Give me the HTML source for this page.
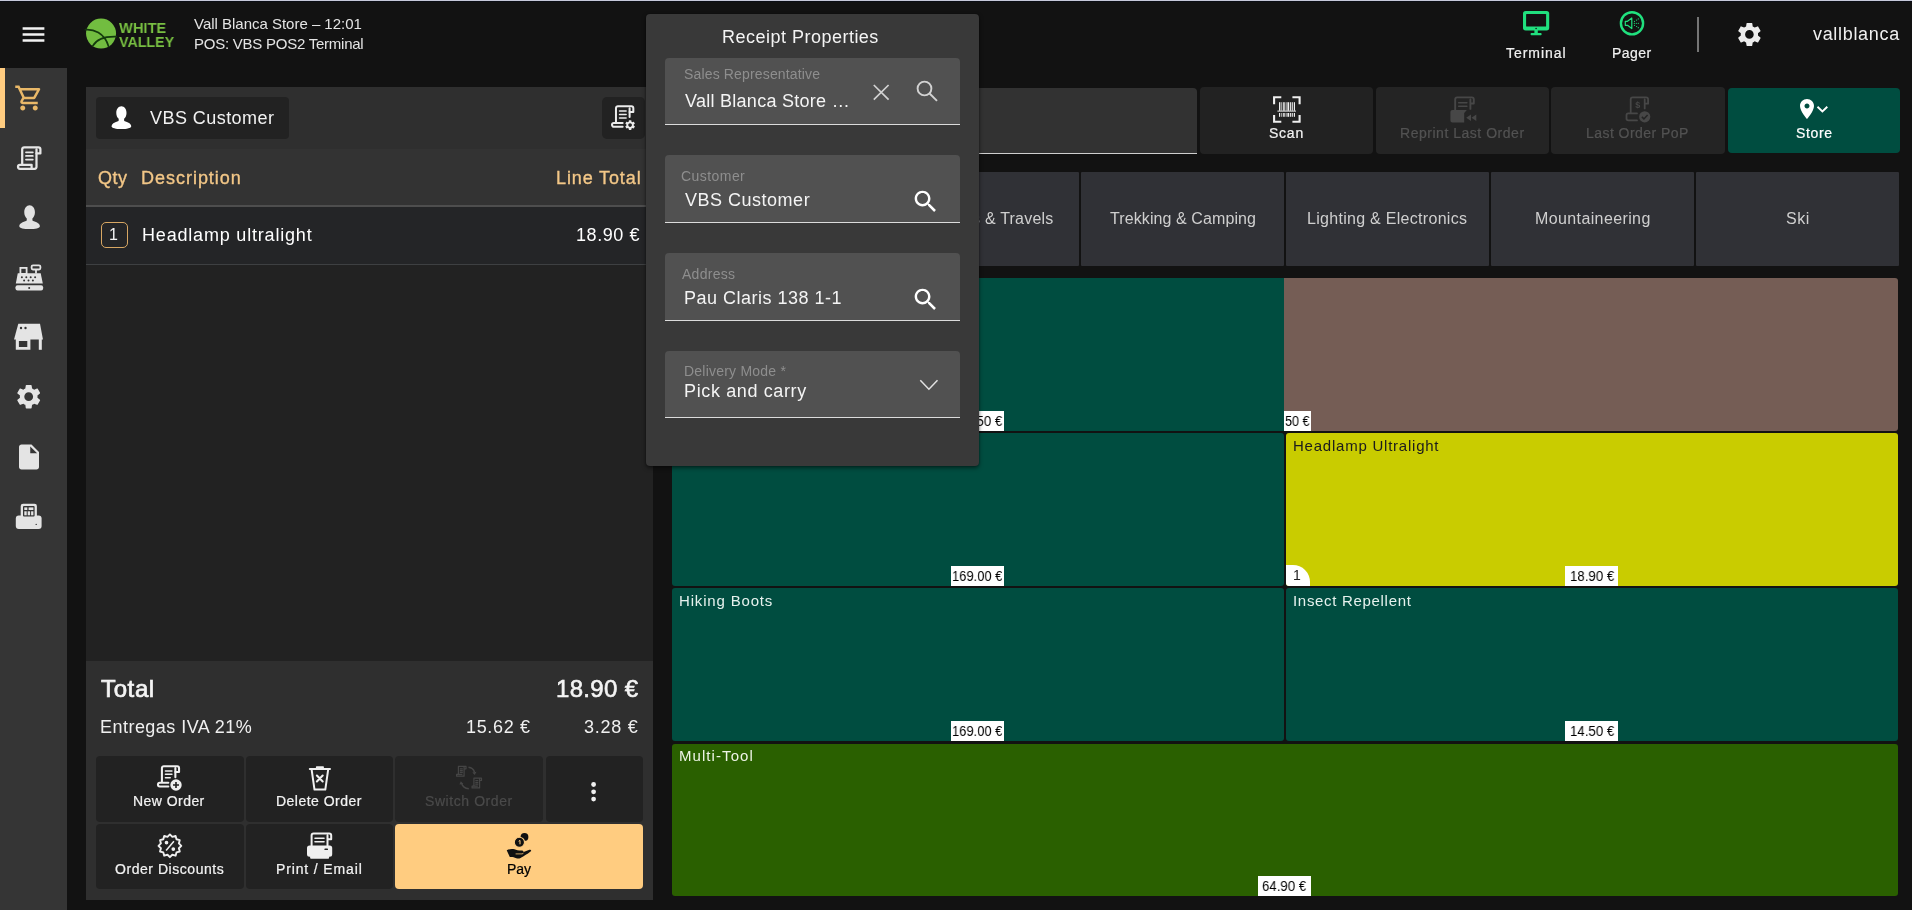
<!DOCTYPE html>
<html lang="en">
<head>
<meta charset="utf-8">
<title>POS - Receipt Properties</title>
<style>
*{box-sizing:border-box;margin:0;padding:0}
html,body{width:1912px;height:910px;overflow:hidden;background:#121212}
body{position:relative;font-family:"Liberation Sans",sans-serif;color:#fff;font-size:14px}
.a{position:absolute}
.t{position:absolute;white-space:pre;line-height:1;will-change:transform}
svg{display:block;position:absolute;overflow:visible}
.btn{position:absolute;background:#222;border-radius:4px}
.tab{position:absolute;top:172px;height:94.200px;width:202.950px;background:#303136;border-radius:1px}
.tile{position:absolute;border-radius:3px;overflow:hidden}
.pl{position:absolute;background:#fff;height:19.8px;width:52.8px}
.fld{position:absolute;left:665px;width:295px;background:#515151;border-radius:4px 4px 0 0;border-bottom:1.4px solid #dcdcdc}
</style>
</head>
<body>
<svg width="0" height="0" style="position:absolute">
<defs>
<symbol id="rcpt" viewBox="0 0 24.4 24" overflow="visible">
<g fill="none" stroke="currentColor" stroke-width="2.25" stroke-linecap="round" stroke-linejoin="round">
<path d="M5.2 17.8V3.3a2 2 0 0 1 2-2H21.4a2 2 0 0 1 2 2V7.4H19.5"/>
<path d="M19.5 3.3V20.8a2 2 0 0 1-2 2H3a2 2 0 0 1 0-4H14.6V22"/>
<path stroke-width="1.8" d="M9 6.3H15.8M9 9.9H15.8M9 13.600H15.8"/>
</g>
</symbol>
<symbol id="gear" viewBox="0 0 24 24"><path fill="currentColor" d="M19.14 12.94c.04-.3.06-.61.06-.94 0-.32-.02-.64-.07-.94l2.030-1.580c.18-.14.23-.41.12-.61l-1.920-3.320c-.12-.22-.37-.29-.59-.22l-2.390.96c-.5-.38-1.030-.7-1.620-.94l-.36-2.540c-.04-.24-.24-.41-.48-.41h-3.840c-.24 0-.43.17-.47.41l-.36 2.540c-.59.24-1.130.57-1.620.94l-2.390-.96c-.22-.08-.47 0-.59.22L2.740 8.870c-.12.21-.08.47.12.61l2.030 1.580c-.05.3-.09.63-.09.94s.02.64.07.94l-2.030 1.580c-.18.14-.23.41-.12.61l1.920 3.320c.12.22.37.29.59.22l2.390-.96c.5.38 1.030.7 1.620.94l.36 2.540c.05.24.24.41.48.41h3.840c.24 0 .44-.17.47-.41l.36-2.540c.59-.24 1.130-.56 1.620-.94l2.390.96c.22.08.47 0 .59-.22l1.920-3.320c.12-.22.07-.47-.12-.61l-2.010-1.580zM12 15.600c-1.980 0-3.600-1.620-3.600-3.600s1.620-3.600 3.600-3.600 3.600 1.620 3.600 3.600-1.620 3.600-3.600 3.600z"/></symbol>
<symbol id="srch" viewBox="0 0 24 24"><path fill="currentColor" d="M15.5 14h-.79l-.28-.27C15.410 12.590 16 11.110 16 9.500 16 5.910 13.090 3 9.500 3S3 5.910 3 9.500 5.910 16 9.500 16c1.610 0 3.090-.59 4.230-1.570l.27.28v.79l5 4.990L20.490 19l-4.990-5zm-6 0C7.010 14 5 11.990 5 9.500S7.010 5 9.500 5 14 7.010 14 9.500 11.990 14 9.500 14z"/></symbol>
<symbol id="person" viewBox="0 0 21 24"><path fill="currentColor" d="M10.500.3c3 0 5.300 2.900 5.300 6.900 0 2.600-1 4.800-2.500 6.100v1.500c0 .5.300.9.800 1.100 3.900 1.300 6.600 2.800 6.600 5.100 0 2-4.500 2.900-10.200 2.900S.300 23 .300 21c0-2.300 2.700-3.800 6.600-5.100.5-.2.800-.6.800-1.100v-1.500C6.200 12 5.200 9.800 5.200 7.200 5.200 3.200 7.500.3 10.500.3z"/></symbol>
</defs>
</svg>
<!-- top hairline -->
<div class="a" style="left:0;top:0;width:1912px;height:1px;background:#c6c9da"></div>
<div class="a" style="left:0;top:1px;width:1912px;height:1px;background:#0b0e15"></div>

<!-- hamburger -->
<svg style="left:19px;top:20px" width="29" height="29" viewBox="0 0 24 24"><path fill="#f2f2f2" d="M3 18h18v-2H3v2zm0-5h18v-2H3v2zm0-7v2h18V6H3z"/></svg>

<!-- logo -->
<svg style="left:85px;top:17px" width="33" height="33" viewBox="85 17 33 33">
<circle cx="101.050" cy="33.600" r="15" fill="#72bd40"/>
<g fill="none" stroke="#143a0d" stroke-width="1.700" stroke-linecap="round">
<path d="M85.400 29.600C93 29 104.500 32.500 108.600 46.500"/>
<path d="M92.800 45.800C96 40 104 36.200 116.300 36.600"/>
</g>
</svg>

<!-- top right status -->
<svg style="left:1520px;top:8px" width="32" height="30" viewBox="1520 8 32 30">
<rect x="1523" y="11" width="26.200" height="19.400" rx="2.600" fill="#20e07e"/>
<rect x="1526.100" y="14" width="20" height="12.600" rx=".6" fill="#121212"/>
<circle cx="1536.100" cy="28.500" r=".8" fill="#121212"/>
<rect x="1534.400" y="30" width="3.400" height="3.400" fill="#20e07e"/>
<rect x="1530.600" y="33" width="11" height="2.200" rx=".8" fill="#20e07e"/>
</svg>
<svg style="left:1616px;top:8px" width="32" height="32" viewBox="1616 8 32 32">
<circle cx="1632" cy="23.300" r="11.100" fill="none" stroke="#20e07e" stroke-width="2.400"/>
<path d="M1625.300 21.300h2.200l4.300-3.300v10.600l-4.300-3.300h-2.200z" fill="none" stroke="#20e07e" stroke-width="1.200" stroke-linejoin="round"/>
<g fill="#20e07e"><circle cx="1634.300" cy="23.300" r=".6"/><circle cx="1636.300" cy="23.300" r=".6"/><circle cx="1638.300" cy="23.300" r=".6"/><circle cx="1634.500" cy="21.300" r=".6"/><circle cx="1636.600" cy="20.100" r=".6"/><circle cx="1638.300" cy="18.900" r=".6"/><circle cx="1634.500" cy="25.300" r=".6"/><circle cx="1636.600" cy="26.500" r=".6"/><circle cx="1638.300" cy="27.700" r=".6"/></g>
</svg>
<div class="a" style="left:1697px;top:17px;width:2px;height:35px;background:#757575"></div>
<svg style="left:1735.100px;top:20.300px;color:#ececec" width="28.800" height="28.800"><use href="#gear"/></svg>

<!-- sidebar -->
<div class="a" style="left:0;top:68px;width:67px;height:842px;background:#353535"></div>
<div class="a" style="left:0;top:68px;width:5px;height:60px;background:#ffcc80"></div>
<svg style="left:14px;top:83px" width="30" height="30" viewBox="0 0 24 24"><path fill="#e9b868" d="M15.550 13c.75 0 1.410-.41 1.750-1.030l3.580-6.490c.37-.66-.11-1.480-.87-1.480H5.210l-.94-2H1v2h2l3.600 7.590-1.350 2.440C4.520 15.370 5.480 17 7 17h12v-2H7l1.100-2h7.450zM6.160 6h12.150l-2.760 5H8.530L6.160 6zM7 18c-1.100 0-1.990.9-1.990 2S5.900 22 7 22s2-.9 2-2-.9-2-2-2zm10 0c-1.100 0-1.990.9-1.990 2s.89 2 1.990 2 2-.9 2-2-.9-2-2-2z"/></svg>
<svg style="left:16.500px;top:145.600px;color:#e6e6e6" width="24.400" height="24"><use href="#rcpt"/></svg>
<svg style="left:18.900px;top:205px;color:#e2e2e2" width="21.200" height="24.200"><use href="#person"/></svg>
<!-- cash register -->
<svg style="left:14px;top:262px" width="31" height="30" viewBox="14 262 31 30">
<g fill="#e4e4e4">
<path d="M17.800 273.200h22.900l2.100 10.200h-27z"/>
<rect x="15.500" y="285.200" width="27.600" height="5.400" rx="2"/>
</g>
<g fill="none" stroke="#e4e4e4" stroke-width="1.800">
<rect x="20.400" y="267.900" width="6.200" height="6"/>
<rect x="31.600" y="265.300" width="8.800" height="4.200" rx="1.400"/>
<path d="M36 269.500v4"/>
</g>
<g fill="#333"><circle cx="21.900" cy="277.300" r="1"/><circle cx="26.300" cy="277.300" r="1"/><circle cx="30.700" cy="277.300" r="1"/><circle cx="35.100" cy="277.300" r="1"/><circle cx="24.100" cy="280.600" r="1"/><circle cx="28.500" cy="280.600" r="1"/><circle cx="32.900" cy="280.600" r="1"/><circle cx="29.200" cy="287.900" r="1"/></g>
</svg>
<!-- store -->
<svg style="left:13px;top:322px" width="32" height="30" viewBox="13 322 32 30">
<g fill="#e4e4e4">
<path d="M18.300 323.800h21.700l3 15.700h-29z"/>
<path d="M15.800 339h14.600v10.800H15.800zM18.900 341v6h8.400v-6z" fill-rule="evenodd"/>
<rect x="38.800" y="339" width="3" height="10.800"/>
</g>
<g fill="#333"><circle cx="21" cy="328" r="1.200"/><circle cx="25.500" cy="328" r="1.200"/></g>
</svg>
<svg style="left:13.500px;top:382.400px;color:#e4e4e4" width="29.400" height="29.400"><use href="#gear"/></svg>
<svg style="left:13.800px;top:441.900px" width="30" height="30" viewBox="0 0 24 24"><path fill="#e4e4e4" d="M6 2c-1.100 0-1.990.9-1.990 2L4 20c0 1.100.89 2 1.990 2H18c1.100 0 2-.9 2-2V8l-6-6H6zm7 7V3.500L18.500 9H13z"/></svg>
<!-- receipt printer -->
<svg style="left:14px;top:502px" width="30" height="29" viewBox="14 502 30 29">
<g fill="#e4e4e4">
<rect x="15.800" y="515.600" width="25.800" height="13.300" rx="3"/>
<rect x="20.700" y="503.700" width="16.200" height="15" rx="2.400"/>
</g>
<g fill="#333">
<rect x="23" y="506" width="11.600" height="10.500" rx="1"/>
<circle cx="36.200" cy="524.400" r=".7"/>
</g>
<g fill="#e4e4e4">
<rect x="24.300" y="507.400" width="3" height="2.600"/><rect x="28.600" y="507.400" width="4.800" height="2.600"/>
<rect x="24.300" y="511.300" width="2.400" height="4"/><rect x="27.700" y="511.300" width="2.400" height="4"/><rect x="31.100" y="511.300" width="2.300" height="4"/>
</g>
</svg>
<!-- left order panel -->
<div class="a" style="left:86px;top:86.700px;width:567px;height:813.500px;background:#222"></div>
<div class="a" style="left:86px;top:86.700px;width:567px;height:62.300px;background:#2f2f2f"></div>
<div class="a" style="left:86px;top:149px;width:567px;height:57px;background:#333"></div>
<div class="a" style="left:86px;top:205.300px;width:567px;height:1.400px;background:#4e4e4e"></div>
<div class="a" style="left:86px;top:206.700px;width:567px;height:57.600px;background:#242527"></div>
<div class="a" style="left:86px;top:264.100px;width:567px;height:1.200px;background:#3e4042"></div>
<div class="a" style="left:86px;top:660.800px;width:567px;height:239.400px;background:#2f2f2f"></div>

<div class="btn" style="left:96px;top:97px;width:193.400px;height:42.400px"></div>
<svg style="left:111.200px;top:105.700px;color:#fff" width="20.800" height="23.200"><use href="#person"/></svg>
<div class="btn" style="left:602.400px;top:97px;width:42.600px;height:42.400px;border-radius:5px"></div>
<svg style="left:611.300px;top:105px;color:#ececec" width="23.300" height="22.900" viewBox="0 0 24.400 24">
<g fill="none" stroke="currentColor" stroke-width="2.100" stroke-linecap="round" stroke-linejoin="round">
<path d="M5.200 17.800V3.300a2 2 0 0 1 2-2H21.400a2 2 0 0 1 2 2V7.400H19.500"/>
<path d="M19.500 3.300V12.600M12.200 22.800H3a2 2 0 0 1 0-4H12.200"/>
<path stroke-width="1.700" d="M9 6.300H15.800M9 9.900H15.800M9 13.600H15.800"/>
</g>
</svg>
<svg style="left:624.100px;top:119.400px;color:#ececec" width="12.200" height="12.200"><use href="#gear"/></svg>

<!-- qty box -->
<div class="a" style="left:101px;top:221.800px;width:26.800px;height:26.400px;border:1.300px solid #d8a763;border-radius:5px"></div>

<!-- bottom buttons -->
<div class="btn" style="left:96.300px;top:756.300px;width:147.300px;height:66px"></div>
<div class="btn" style="left:245.600px;top:756.300px;width:147.400px;height:66px"></div>
<div class="btn" style="left:395.300px;top:756.300px;width:147.700px;height:66px;background:#242424"></div>
<div class="btn" style="left:545.500px;top:756.300px;width:97.500px;height:66px"></div>
<div class="btn" style="left:96.300px;top:824.300px;width:147.300px;height:65.200px"></div>
<div class="btn" style="left:245.600px;top:824.300px;width:147.400px;height:65.200px"></div>
<div class="btn" style="left:395.200px;top:824.300px;width:247.800px;height:65.200px;background:#ffcc80"></div>

<!-- New Order icon -->
<svg style="left:157px;top:765.400px;color:#f0f0f0" width="23" height="22.600" viewBox="0 0 24.400 24">
<g fill="none" stroke="currentColor" stroke-width="2.200" stroke-linecap="round" stroke-linejoin="round">
<path d="M5.200 17.800V3.300a2 2 0 0 1 2-2H21.400a2 2 0 0 1 2 2V7.400H19.500"/>
<path d="M19.500 3.300V13M12 22.800H3a2 2 0 0 1 0-4H12"/>
<path stroke-width="1.700" d="M9 6.300H15.800M9 9.900H15.800M9 13.600H14"/>
</g>
</svg>
<svg style="left:169.900px;top:779.400px" width="12" height="12" viewBox="0 0 12 12"><circle cx="6" cy="6" r="5.700" fill="#f0f0f0"/><path d="M6 3v6M3 6h6" stroke="#222" stroke-width="1.600" fill="none"/></svg>

<!-- Delete Order icon -->
<svg style="left:308px;top:765px" width="24" height="27" viewBox="308 765 24 27">
<g fill="none" stroke="#f0f0f0" stroke-width="2" stroke-linecap="round" stroke-linejoin="round">
<path d="M309.800 769h20.200M316.800 767.300h6.200"/>
<path d="M311.600 769.300l2.900 20.300h10.800l2.900-20.300"/>
<path stroke-width="2.100" d="M316.900 775.600l5.800 5.800M322.700 775.600l-5.800 5.800"/>
</g>
</svg>

<!-- Switch Order icon (disabled) -->
<svg style="left:455px;top:765px" width="28" height="26" viewBox="455 765 28 26">
<g fill="none" stroke="#454545" stroke-width="1.200" stroke-linejoin="round">
<path d="M458.400 774.800v-8.400h7.600v2.400h-1.900M464.100 766.400v9.800h-7.500v-1.800h5.800"/>
<path d="M459.800 768.800h3M459.800 770.600h3M459.800 772.400h3"/>
<path d="M472.400 788v-8.400h7.600v2.400h-1.900M478.100 779.600v9.800h-7.500v-1.800h5.800" transform="translate(1.500 -1.500)"/>
<path d="M475.300 780.500h3M475.300 782.300h3M475.300 784.100h3"/>
<path stroke-width="1.500" d="M468.500 767.200c3 .3 5.200 2 6 5"/>
<path stroke-width="1.500" d="M468.800 788.800c-3.800-.5-6.200-2.200-7.200-5.600"/>
</g>
<path d="M472.300 772.600l4.200-.8-1.800 3.300z" fill="#454545"/><path d="M459.400 784.500l1.400-3.200 2.600 2.600z" fill="#454545"/>
</svg>

<!-- more dots -->
<svg style="left:589px;top:780px" width="10" height="24" viewBox="589 780 10 24"><g fill="#f0f0f0"><circle cx="593.600" cy="784.500" r="2.400"/><circle cx="593.600" cy="791.800" r="2.400"/><circle cx="593.600" cy="799.100" r="2.400"/></g></svg>

<!-- Order Discounts icon -->
<svg style="left:157px;top:832px" width="26" height="28" viewBox="157 832 26 28">
<path fill="none" stroke="#f0f0f0" stroke-width="1.900" stroke-linejoin="round" d="M169.90 834.40L172.31 836.82L175.60 835.93L176.48 839.22L179.77 840.10L178.88 843.39L181.30 845.80L178.88 848.21L179.77 851.50L176.48 852.38L175.60 855.67L172.31 854.78L169.90 857.20L167.49 854.78L164.20 855.67L163.32 852.38L160.03 851.50L160.92 848.21L158.50 845.80L160.92 843.39L160.03 840.10L163.32 839.22L164.20 835.93L167.49 836.82Z"/>
<g stroke="#f0f0f0" fill="none" stroke-width="1.500"><path d="M173.900 841.200l-7.800 9.300"/><circle cx="166.500" cy="842.600" r="1.100" fill="#f0f0f0"/><circle cx="173.300" cy="849.100" r="1.100" fill="#f0f0f0"/></g>
</svg>

<!-- Print / Email icon -->
<svg style="left:306px;top:831px" width="28" height="29" viewBox="306 831 28 29">
<g fill="none" stroke="#f0f0f0" stroke-width="2" stroke-linejoin="round" stroke-linecap="round">
<path d="M311.600 846v-10.500a2 2 0 0 1 2-2h15.600a2 2 0 0 1 2 2v3.800h-3.700M327.500 835.500v10.500"/>
<path stroke-width="1.600" d="M315 838.300h9M315 841.700h9"/>
</g>
<path fill="#f0f0f0" d="M309.500 845.600h20.200a2.500 2.500 0 0 1 2.500 2.500v6.200a2.500 2.500 0 0 1-2.500 2.500h-.6v1a1 1 0 0 1-1 1h-17a1 1 0 0 1-1-1v-1h-.6a2.500 2.500 0 0 1-2.500-2.500v-6.200a2.500 2.500 0 0 1 2.500-2.500z"/>
<rect x="324.400" y="848.600" width="3.600" height="1.500" rx=".7" fill="#222"/>
</svg>

<!-- Pay icon -->
<svg style="left:505px;top:831px" width="28" height="29" viewBox="505 831 28 29">
<g fill="#111">
<circle cx="524.500" cy="836.900" r="3.900"/>
<circle cx="519.400" cy="842.300" r="5.100" stroke="#ffcc80" stroke-width="1.100"/>
<path d="M506.700 850.200c2.600-1.300 5.400-1.600 7.800-.9 1.900.6 3.800 1.300 6.800 1.300 1.600 0 2.300.7 2.300 1.500l5.200-2.200c1.300-.5 2.500.1 2.400 1.100-2.300 2-7.600 5.300-10.600 6.900-1.500.8-2.600.9-4.300.3-2.400-.9-4.200-1.500-6.500-1.100z"/>
</g>
<path d="M515.600 853.900h6.400c.9 0 1.300-.5 1.300-1.100" fill="none" stroke="#c9a060" stroke-width="1"/>
<path d="M518.700 841.300l1.300-.9v3.900" fill="none" stroke="#ffcc80" stroke-width="1"/>
</svg>
<!-- search input -->
<div class="a" style="left:672px;top:87.600px;width:525.400px;height:66.400px;background:#323232;border-bottom:1.300px solid #cfcfcf;border-radius:4px 4px 0 0"></div>

<!-- toolbar buttons -->
<div class="btn" style="left:1199.700px;top:87px;width:173.300px;height:66.500px"></div>
<div class="btn" style="left:1375.500px;top:87px;width:173.400px;height:66.500px;background:#242424"></div>
<div class="btn" style="left:1551.300px;top:87px;width:173.300px;height:66.500px;background:#242424"></div>
<div class="btn" style="left:1727.600px;top:87.600px;width:172.700px;height:65.600px;background:#004d40"></div>

<!-- scan icon -->
<svg style="left:1272px;top:95px" width="30" height="29" viewBox="1272 95 30 29">
<g fill="none" stroke="#f0f0f0" stroke-width="2.100">
<path d="M1274.100 104.200v-7h7.200M1292.400 97.200h7.200v7M1299.600 115v6.700h-7.200M1281.300 121.700h-7.200V115"/>
</g>
<g fill="#f0f0f0">
<rect x="1279" y="102.200" width="1.400" height="8.600"/><rect x="1281.400" y="102.200" width=".8" height="8.600"/><rect x="1283.200" y="102.200" width="1.500" height="8.600"/><rect x="1285.700" y="102.200" width=".8" height="8.600"/><rect x="1287.400" y="102.200" width="1.800" height="8.600"/><rect x="1290.100" y="102.200" width="1.200" height="8.600"/><rect x="1292.200" y="102.200" width=".9" height="8.600"/><rect x="1293.900" y="102.200" width="1.100" height="8.600"/>
<rect x="1277.400" y="110.600" width="18.600" height="1"/>
<rect x="1279" y="113" width="1.200" height="3.800"/><rect x="1281.400" y="113" width=".8" height="3.800"/><rect x="1283.200" y="113" width="1.500" height="3.800"/><rect x="1285.700" y="113" width=".8" height="3.800"/><rect x="1287.400" y="113" width="1.800" height="3.800"/><rect x="1290.100" y="113" width="1.200" height="3.800"/><rect x="1292.200" y="113" width=".9" height="3.800"/><rect x="1293.900" y="113" width="1.100" height="3.800"/>
</g>
</svg>

<!-- reprint icon (disabled) -->
<svg style="left:1449px;top:95px" width="29" height="29" viewBox="1449 95 29 29">
<g fill="none" stroke="#474747" stroke-width="1.900" stroke-linejoin="round" stroke-linecap="round">
<path d="M1455.200 110v-10.600a2 2 0 0 1 2-2h14.600a2 2 0 0 1 2 2v4.100h-3.400M1470.400 99.400v9.500"/>
<path stroke-width="1.500" d="M1458.600 102.700h8.300M1458.600 106.200h8.300"/>
</g>
<path fill="#474747" d="M1452.400 110h14.400l-2.600 3v9.600h-11.800a2 2 0 0 1-2-2v-8.600a2 2 0 0 1 2-2z"/>
<path fill="#474747" d="M1471 114.600v6.400l-4.800-3.200zM1476.300 114.600v6.400l-4.800-3.200z"/>
</svg>

<!-- last order PoP icon (disabled) -->
<svg style="left:1624px;top:95px;will-change:transform" width="29" height="29" viewBox="1624 95 29 29">
<g fill="none" stroke="#474747" stroke-width="1.800" stroke-linejoin="round" stroke-linecap="round">
<path d="M1630.700 113.200v-13.800a2 2 0 0 1 2-2h13.400a2 2 0 0 1 2 2v4.300h-3.400M1644.700 99.400v9"/>
<path d="M1637 120.400h-8.700a1.800 1.800 0 0 1-1.800-1.800v-3.400a1.800 1.800 0 0 1 1.800-1.800h8.700"/>
</g>
<text x="1637.800" y="108.200" font-size="9" font-family="Liberation Sans,sans-serif" fill="#474747" text-anchor="middle" font-weight="700">$</text>
<circle cx="1644.700" cy="116.800" r="5.600" fill="#474747"/>
<path d="M1641.900 116.900l2 2 3.700-3.900" fill="none" stroke="#242424" stroke-width="1.500"/>
</svg>

<!-- store icon -->
<svg style="left:1794.900px;top:96.500px" width="24" height="24" viewBox="0 0 24 24"><path fill="#fff" d="M12 2C8.130 2 5 5.130 5 9c0 5.250 7 13 7 13s7-7.750 7-13c0-3.870-3.130-7-7-7zm0 9.500c-1.380 0-2.500-1.120-2.500-2.500s1.120-2.500 2.500-2.500 2.500 1.120 2.500 2.500-1.120 2.500-2.500 2.500z"/></svg>
<svg style="left:1815px;top:104px" width="15" height="10" viewBox="1815 104 15 10"><path d="M1817.500 106.700l4.900 4.700 4.900-4.700" fill="none" stroke="#fff" stroke-width="1.900"/></svg>

<!-- category tabs -->
<div class="tab" style="left:671.2px"></div>
<div class="tab" style="left:876.15px"></div>
<div class="tab" style="left:1081.1px"></div>
<div class="tab" style="left:1286.05px"></div>
<div class="tab" style="left:1491.0px"></div>
<div class="tab" style="left:1695.95px"></div>

<!-- product tiles -->
<div class="tile" style="left:672px;top:278px;width:1226px;height:153px;background:#755d55"></div>
<div class="tile" style="left:672px;top:278px;width:612.200px;height:153px;background:#004d40;border-radius:3px 0 0 3px"></div>
<div class="tile" style="left:672px;top:433px;width:612px;height:153px;background:#004d40"></div>
<div class="tile" style="left:1286.200px;top:433px;width:611.800px;height:153px;background:#c9cc00"></div>
<div class="tile" style="left:672px;top:588px;width:612px;height:153px;background:#004d40"></div>
<div class="tile" style="left:1286.200px;top:588px;width:611.800px;height:153px;background:#004d40"></div>
<div class="tile" style="left:672px;top:743.700px;width:1226px;height:152.500px;background:#2a6000"></div>

<!-- price labels -->
<div class="pl" style="left:951.300px;top:411.200px"></div>
<div class="pl" style="left:1284.200px;top:411.200px;width:26.800px"></div>
<div class="pl" style="left:951.300px;top:566.200px"></div>
<div class="pl" style="left:1565.400px;top:566.200px"></div>
<div class="pl" style="left:951.300px;top:721.200px"></div>
<div class="pl" style="left:1565.400px;top:721.200px"></div>
<div class="pl" style="left:1257.900px;top:876.300px"></div>
<!-- qty badge -->
<div class="a" style="left:1286.200px;top:565.400px;width:23.800px;height:20.600px;background:#fff;border-radius:0 17px 0 3px"></div>
<div class="t" style="left:194.3px;top:15.8px;font-size:15px;color:#e4e4e4;letter-spacing:-0.013px">Vall Blanca Store – 12:01</div>
<div class="t" style="left:193.6px;top:35.7px;font-size:15px;color:#e4e4e4;letter-spacing:-0.243px">POS: VBS POS2 Terminal</div>
<div class="t" style="left:119.0px;top:19.6px;font-size:15.5px;color:#78bf42;letter-spacing:0px;font-weight:700;transform:scaleX(0.9460);transform-origin:0 0">WHITE</div>
<div class="t" style="left:119.0px;top:33.5px;font-size:15.5px;color:#78bf42;letter-spacing:0px;font-weight:700;transform:scaleX(0.9183);transform-origin:0 0">VALLEY</div>
<div class="t" style="left:1506.2px;top:45.8px;font-size:14px;color:#f0f0f0;letter-spacing:0.943px;-webkit-text-stroke:0.22px">Terminal</div>
<div class="t" style="left:1611.9px;top:45.8px;font-size:14px;color:#f0f0f0;letter-spacing:0.425px;-webkit-text-stroke:0.22px">Pager</div>
<div class="t" style="left:1812.9px;top:24.8px;font-size:18px;color:#f0f0f0;letter-spacing:0.678px">vallblanca</div>
<div class="t" style="left:149.9px;top:109.0px;font-size:18px;color:#f2f2f2;letter-spacing:0.445px">VBS Customer</div>
<div class="t" style="left:98.3px;top:168.7px;font-size:18px;color:#f3c787;letter-spacing:0.5px;-webkit-text-stroke:0.35px">Qty</div>
<div class="t" style="left:140.5px;top:168.7px;font-size:18px;color:#f3c787;letter-spacing:0.98px;-webkit-text-stroke:0.35px">Description</div>
<div class="t" style="left:555.9px;top:168.7px;font-size:18px;color:#f3c787;letter-spacing:0.878px;-webkit-text-stroke:0.35px">Line Total</div>
<div class="t" style="left:109.2px;top:227.2px;font-size:16px;color:#f2f2f2;letter-spacing:0px">1</div>
<div class="t" style="left:142.3px;top:226.3px;font-size:18px;color:#ffffff;letter-spacing:0.811px">Headlamp ultralight</div>
<div class="t" style="left:576.4px;top:226.3px;font-size:18px;color:#ffffff;letter-spacing:0.567px">18.90 €</div>
<div class="t" style="left:101.4px;top:677.1px;font-size:24px;color:#f4f4f4;letter-spacing:0.625px;-webkit-text-stroke:0.7px">Total</div>
<div class="t" style="left:555.7px;top:677.1px;font-size:24px;color:#f4f4f4;letter-spacing:0.333px;-webkit-text-stroke:0.6px">18.90 €</div>
<div class="t" style="left:100.4px;top:718.4px;font-size:18px;color:#f0f0f0;letter-spacing:0.467px">Entregas IVA 21%</div>
<div class="t" style="left:466.1px;top:718.4px;font-size:18px;color:#f0f0f0;letter-spacing:0.65px">15.62 €</div>
<div class="t" style="left:583.9px;top:718.4px;font-size:18px;color:#f0f0f0;letter-spacing:0.76px">3.28 €</div>
<div class="t" style="left:133.3px;top:793.7px;font-size:14px;color:#f2f2f2;letter-spacing:0.45px;-webkit-text-stroke:0.22px">New Order</div>
<div class="t" style="left:276.1px;top:793.7px;font-size:14px;color:#f2f2f2;letter-spacing:0.482px;-webkit-text-stroke:0.22px">Delete Order</div>
<div class="t" style="left:424.7px;top:793.7px;font-size:14px;color:#4a4a4a;letter-spacing:0.573px;-webkit-text-stroke:0.22px">Switch Order</div>
<div class="t" style="left:115.1px;top:861.6px;font-size:14px;color:#f2f2f2;letter-spacing:0.543px;-webkit-text-stroke:0.22px">Order Discounts</div>
<div class="t" style="left:276.1px;top:861.6px;font-size:14px;color:#f2f2f2;letter-spacing:0.858px;-webkit-text-stroke:0.22px">Print / Email</div>
<div class="t" style="left:506.8px;top:861.8px;font-size:14px;color:#000;letter-spacing:-0.1px;-webkit-text-stroke:0.22px">Pay</div>
<div class="t" style="left:1268.9px;top:125.8px;font-size:14px;color:#f2f2f2;letter-spacing:0.767px;-webkit-text-stroke:0.22px">Scan</div>
<div class="t" style="left:1399.9px;top:125.8px;font-size:14px;color:#525252;letter-spacing:0.524px;-webkit-text-stroke:0.22px">Reprint Last Order</div>
<div class="t" style="left:1586.3px;top:125.8px;font-size:14px;color:#525252;letter-spacing:0.454px;-webkit-text-stroke:0.22px">Last Order PoP</div>
<div class="t" style="left:1795.8px;top:125.9px;font-size:14px;color:#ffffff;letter-spacing:0.65px;-webkit-text-stroke:0.22px">Store</div>
<div class="t" style="left:901.1px;top:211.3px;font-size:16px;color:#cfcfcf;letter-spacing:0.211px">Backpacks &amp; Travels</div>
<div class="t" style="left:1110.0px;top:211.3px;font-size:16px;color:#cfcfcf;letter-spacing:0.094px">Trekking &amp; Camping</div>
<div class="t" style="left:1307.2px;top:211.3px;font-size:16px;color:#cfcfcf;letter-spacing:0.29px">Lighting &amp; Electronics</div>
<div class="t" style="left:1534.5px;top:211.3px;font-size:16px;color:#cfcfcf;letter-spacing:0.385px">Mountaineering</div>
<div class="t" style="left:1785.5px;top:211.3px;font-size:16px;color:#cfcfcf;letter-spacing:0.5px">Ski</div>
<div class="t" style="left:1292.7px;top:437.9px;font-size:15px;color:#1c1c1c;letter-spacing:0.767px">Headlamp Ultralight</div>
<div class="t" style="left:678.6px;top:593.0px;font-size:15px;color:#e6f2ee;letter-spacing:0.827px">Hiking Boots</div>
<div class="t" style="left:1292.7px;top:593.0px;font-size:15px;color:#e6f2ee;letter-spacing:0.687px">Insect Repellent</div>
<div class="t" style="left:678.6px;top:748.0px;font-size:15px;color:#eef4e6;letter-spacing:1.067px">Multi-Tool</div>
<div class="t" style="left:958.12px;top:413.0px;font-size:15px;color:#000;letter-spacing:0px;transform:scaleX(0.8837);transform-origin:0 0">12.50 €</div>
<div class="t" style="left:1284.76px;top:413.0px;font-size:15px;color:#000;letter-spacing:0px;transform:scaleX(0.8429);transform-origin:0 0">50 €</div>
<div class="t" style="left:952.24px;top:568.0px;font-size:15px;color:#000;letter-spacing:0px;transform:scaleX(0.8632);transform-origin:0 0">169.00 €</div>
<div class="t" style="left:1569.62px;top:568.0px;font-size:15px;color:#000;letter-spacing:0px;transform:scaleX(0.8837);transform-origin:0 0">18.90 €</div>
<div class="t" style="left:952.24px;top:723.0px;font-size:15px;color:#000;letter-spacing:0px;transform:scaleX(0.8632);transform-origin:0 0">169.00 €</div>
<div class="t" style="left:1569.62px;top:723.0px;font-size:15px;color:#000;letter-spacing:0px;transform:scaleX(0.8837);transform-origin:0 0">14.50 €</div>
<div class="t" style="left:1262.22px;top:878.0px;font-size:15px;color:#000;letter-spacing:0px;transform:scaleX(0.8816);transform-origin:0 0">64.90 €</div>
<div class="t" style="left:1292.9px;top:568.2px;font-size:14px;color:#222;letter-spacing:0px">1</div>
<!-- dialog -->
<div class="a" style="left:646px;top:14px;width:333px;height:451.500px;background:#393939;border-radius:4px;box-shadow:0 2px 4px rgba(0,0,0,.5),0 0 2px rgba(0,0,0,.4)"></div>
<div class="fld" style="top:58.200px;height:66.800px"></div>
<div class="fld" style="top:155px;height:68.200px"></div>
<div class="fld" style="top:253.200px;height:68px"></div>
<div class="fld" style="top:351px;height:67px"></div>
<svg style="left:871px;top:82px" width="20" height="20" viewBox="871 82 20 20"><path d="M873.800 85l14.800 14.600M888.600 85l-14.800 14.600" fill="none" stroke="#d2d2d2" stroke-width="1.700"/></svg>
<svg style="left:914px;top:79px" width="27" height="25" viewBox="914 79 27 25"><g fill="none" stroke="#d2d2d2" stroke-width="1.900"><circle cx="924.500" cy="88.500" r="6.900"/><path d="M929.600 93.500l7.400 7.400"/></g></svg>
<svg style="left:911.300px;top:187px;color:#fff" width="29.200" height="29.200"><use href="#srch"/></svg>
<svg style="left:911.300px;top:284.800px;color:#fff" width="29.200" height="29.200"><use href="#srch"/></svg>
<svg style="left:918px;top:377px" width="28" height="16" viewBox="918 377 28 16"><path d="M920.300 380.200l8.600 9 8.600-9" fill="none" stroke="#e2e2e2" stroke-width="1.500"/></svg>
<div class="t" style="left:721.7px;top:27.9px;font-size:18px;color:#f4f4f4;letter-spacing:0.488px">Receipt Properties</div>
<div class="t" style="left:683.5px;top:66.8px;font-size:14px;color:#8e8e8e;letter-spacing:0.153px">Sales Representative</div>
<div class="t" style="left:684.5px;top:91.6px;font-size:18px;color:#f4f4f4;letter-spacing:0.272px">Vall Blanca Store …</div>
<div class="t" style="left:680.8px;top:169.1px;font-size:14px;color:#8e8e8e;letter-spacing:0.443px">Customer</div>
<div class="t" style="left:685.1px;top:191.0px;font-size:18px;color:#f4f4f4;letter-spacing:0.509px">VBS Customer</div>
<div class="t" style="left:681.8px;top:267.2px;font-size:14px;color:#8e8e8e;letter-spacing:0.283px">Address</div>
<div class="t" style="left:684.1px;top:288.8px;font-size:18px;color:#f4f4f4;letter-spacing:0.494px">Pau Claris 138 1-1</div>
<div class="t" style="left:683.5px;top:363.8px;font-size:14px;color:#8e8e8e;letter-spacing:0.221px">Delivery Mode *</div>
<div class="t" style="left:683.5px;top:381.8px;font-size:18px;color:#f4f4f4;letter-spacing:0.631px">Pick and carry</div>
</body>
</html>
